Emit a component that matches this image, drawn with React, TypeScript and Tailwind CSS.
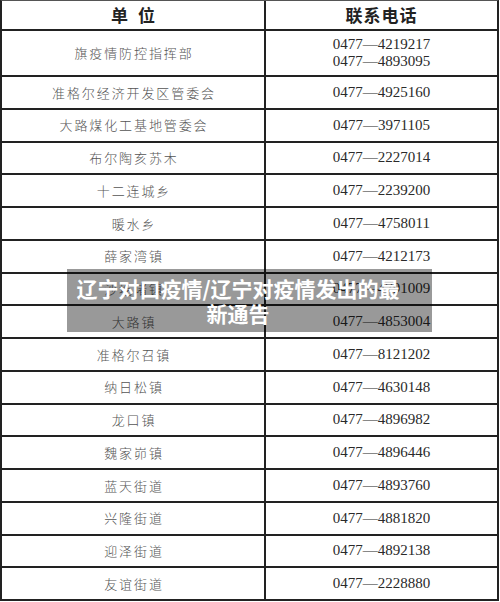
import React from "react";

const rows: [string, string[]][] = [
  ["准格尔经济开发区管委会", ["0477—4925160"]],
  ["大路煤化工基地管委会", ["0477—3971105"]],
  ["布尔陶亥苏木", ["0477—2227014"]],
  ["十二连城乡", ["0477—2239200"]],
  ["暖水乡", ["0477—4758011"]],
  ["薛家湾镇", ["0477—4212173"]],
  ["沙圪堵镇", ["0477—4791009"]],
  ["大路镇", ["0477—4853004"]],
  ["准格尔召镇", ["0477—8121202"]],
  ["纳日松镇", ["0477—4630148"]],
  ["龙口镇", ["0477—4896982"]],
  ["魏家峁镇", ["0477—4896446"]],
  ["蓝天街道", ["0477—4893760"]],
  ["兴隆街道", ["0477—4881820"]],
  ["迎泽街道", ["0477—4892138"]],
  ["友谊街道", ["0477—2228880"]],
];

function Row({ name, phones, h }: { name: string; phones: string[]; h: string }) {
  return (
    <div className={`flex border-b-2 border-[#222] ${h}`}>
      <div className="w-[264px] border-r-2 border-[#222] flex items-center justify-center text-[13px] tracking-[1.9px] pl-[2px] text-[#555] font-light font-['Noto_Sans_CJK_SC','Noto_Sans',sans-serif]">
        {name}
      </div>
      <div className="flex-1 flex flex-col items-center justify-center text-[15px] leading-[17px] text-[#2a2a2a] font-['Liberation_Serif','DejaVu_Serif',serif]">
        {phones.map((p) => (
          <div key={p}>{p}</div>
        ))}
      </div>
    </div>
  );
}

export default function App() {
  return (
    <div className="relative w-[500px] h-[602px] bg-white overflow-hidden">
      <div className="w-[499px] border-x-2 border-[#222] border-t border-t-[#555]">
        <div className="flex border-b-2 border-[#222] h-[30px] font-['Noto_Sans_CJK_SC','Noto_Sans',sans-serif]">
          <div className="w-[264px] border-r-2 border-[#222] flex items-center justify-center text-[17px] font-bold text-[#222] tracking-[10px] pl-[10px]">
            单位
          </div>
          <div className="flex-1 flex items-center justify-center text-[17px] font-bold text-[#222] tracking-[1px]">
            联系电话
          </div>
        </div>
        <Row name="旗疫情防控指挥部" phones={["0477—4219217", "0477—4893095"]} h="h-[46px]" />
        {rows.map(([n, p]) => (
          <Row key={n} name={n} phones={p} h="h-[32.75px]" />
        ))}
      </div>
      <div className="absolute left-[67px] top-[269px] w-[365px] h-[63px] bg-black/40 pl-[8px] pr-[31px] py-[6.5px] text-center text-white font-bold text-[21px] leading-[25px] font-['Noto_Sans_CJK_SC','Noto_Sans',sans-serif]">
        辽宁对口疫情/辽宁对疫情发出的最新通告
      </div>
    </div>
  );
}
